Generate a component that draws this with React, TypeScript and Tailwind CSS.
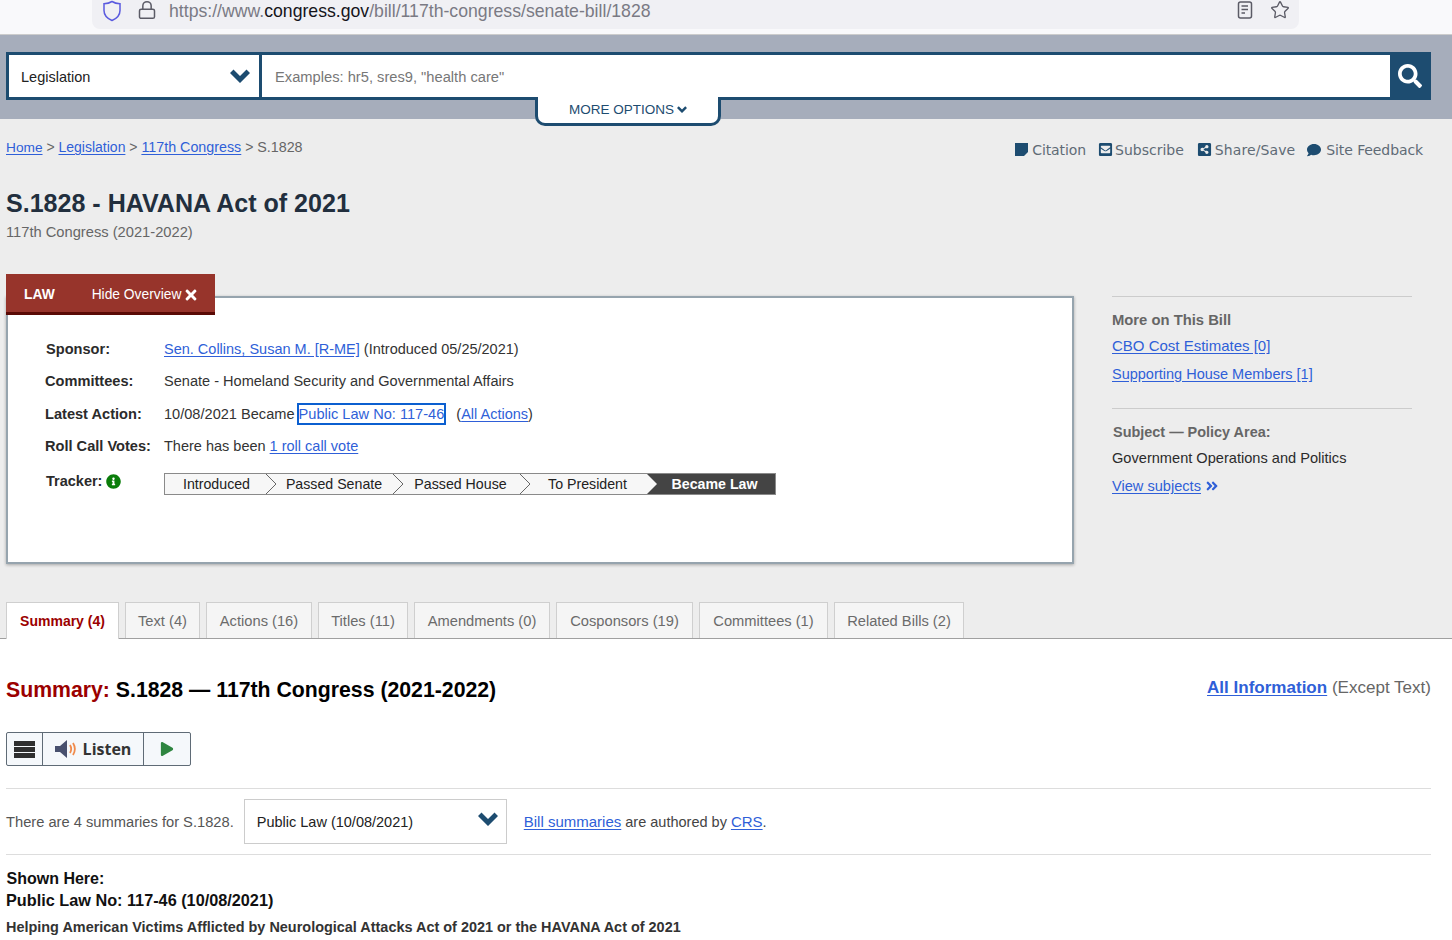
import React from "react";
import { FaSearch, FaTimes, FaInfoCircle, FaAngleDoubleRight, FaEnvelopeSquare, FaShareAltSquare, FaComment, FaPlay } from "react-icons/fa";
import { Lock, Star } from "lucide-react";

const A = ({ children, className = "" }: { children: React.ReactNode; className?: string }) => (
  <a href="#" className={`text-[#2f5fd8] underline underline-offset-2 ${className}`}>{children}</a>
);

const HeavyChevron = ({ w, h, className = "" }: { w: number; h: number; className?: string }) => (
  <svg width={w} height={h} viewBox="0 0 20 14" className={className} fill="#1d4c70">
    <path d="M0 4 L3.500 0.500 L10 7 L16.500 0.500 L20 4 L10 14 Z" />
  </svg>
);

function Row({ label, children, labelClass = "", className = "", valueClass = "" }: { label: React.ReactNode; children: React.ReactNode; labelClass?: string; className?: string; valueClass?: string }) {
  return (
    <div className={`flex h-[32px] items-center ${className}`}>
      <div className={`w-[119px] text-[14.6px] font-bold text-[#2b2b2b] ${labelClass}`}>{label}</div>
      <div className={`text-[#333] ${valueClass}`}>{children}</div>
    </div>
  );
}

const Chevron = () => (
  <svg width="11" height="20" viewBox="0 0 11 20" className="block" fill="none">
    <path d="M0 0 L10 10 L0 20" stroke="#666" strokeWidth="1" />
  </svg>
);

function Tracker() {
  const items: [string, number, string][] = [
    ["Introduced", 101, "pl-[2px]"],
    ["Passed Senate", 127, "pl-[9px]"],
    ["Passed House", 127, "pl-[8px]"],
    ["To President", 127, "pl-[8px]"],
  ];
  return (
    <div className="box-border flex h-[22px] w-[612px] border border-[#8a8a8a] bg-[#f7f7f7] text-[14.2px] text-[#222]">
      {items.map(([t, w, pad], i) => (
        <div key={t} className={`relative flex items-center justify-center ${pad}`} style={{ width: w }}>
          {t}
          {i < 3 && <div className="absolute left-full top-0 z-10"><Chevron /></div>}
        </div>
      ))}
      <div className="relative flex flex-1 items-center justify-center bg-[#444] pl-[7px] font-bold text-white">
        <svg width="10" height="20" viewBox="0 0 10 20" className="absolute left-0 top-0" fill="#f7f7f7"><path d="M0 0 L10 10 L0 20 Z" /></svg>
        Became Law
      </div>
    </div>
  );
}

function Tab({ children, w, active = false }: { children: React.ReactNode; w: number; active?: boolean }) {
  return (
    <div
      style={{ width: w }}
      className={`flex items-center justify-center border border-b-0 border-[#cfcfcf] ${active ? "h-[37px] border-[#bcbcbc] bg-white text-[14px] font-bold text-[#9b0000]" : "h-[36px] bg-[#f5f5f5] pt-[2px] text-[14.7px] text-[#6b6b6b]"}`}
    >
      {children}
    </div>
  );
}

export default function App() {
  return (
    <div className="h-[940px] w-[1452px] overflow-hidden bg-white text-[14.5px] leading-none text-[#333] [font-family:'Liberation_Sans',Arial,sans-serif]">
      {/* browser bar */}
      <div className="h-[35px] border-b border-[#cccccc] bg-[#f9f9fb] pl-[92px]">
        <div className="flex h-[29px] w-[1207px] items-center rounded-b-lg bg-[#f0f0f4] pb-[6px]">
          <svg width="20" height="22" viewBox="0 0 20 22" className="ml-[10px] -mt-[2px]" fill="none">
            <path d="M10 1.500 C7.500 3 5 3.600 2 3.800 V10.500 C2 15.500 5.500 18.600 10 20.500 C14.500 18.600 18 15.500 18 10.500 V3.800 C15 3.600 12.500 3 10 1.500Z" stroke="#5a5adf" strokeWidth="1.500" />
          </svg>
          <Lock size={20} strokeWidth={1.8} color="#5b5b66" className="ml-[15px] -mt-[4px]" />
          <div className="ml-[12px] text-[17.66px] text-[#7a7a84]">
            https://www.<span className="text-[#15141a]">congress.gov</span>/bill/117th-congress/senate-bill/1828
          </div>
          <div className="flex-1" />
          <svg width="16" height="18" viewBox="0 0 16 18" fill="none" stroke="#5b5b66" strokeWidth="1.5" className="-mt-[4px] -ml-[1px]">
            <rect x="1.500" y="1" width="13" height="16" rx="2" />
            <path d="M4.500 5 H11 M4.500 8.500 H11 M4.500 12 H8" />
          </svg>
          <Star size={20} strokeWidth={1.6} color="#5b5b66" className="ml-[17px] mr-[9px] -mt-[4px]" />
        </div>
      </div>

      {/* search band */}
      <div className="h-[84px] bg-[#a6adbb] px-[6px] pt-[17px]">
        <div className="relative flex h-[48px] w-[1425px] border-[3px] border-[#1d4c70] bg-white">
          <div className="flex w-[253px] items-center justify-between border-r-[3px] border-[#1d4c70] pl-[12px] pr-[9px] pt-[2px] text-[14.500px] text-[#222]">
            Legislation
            <HeavyChevron w={20} h={14} className="-mt-[3px]" />
          </div>
          <div className="flex flex-1 items-center pl-[13px] pt-[2px] text-[14.7px] text-[#777]">Examples: hr5, sres9, "health care"</div>
          <div className="flex w-[38px] items-center justify-center bg-[#1d4c70] pl-[2px]">
            <FaSearch size={24} color="#fff" />
          </div>
          <div className="absolute left-[526px] top-[42px] flex h-[29px] w-[186px] items-center justify-center gap-[3px] rounded-b-[10px] border-[3px] border-t-0 border-[#1d4c70] bg-white pb-[1px] text-[13.5px] text-[#1d4c70]">
            MORE OPTIONS <HeavyChevron w={10} h={7} />
          </div>
        </div>
      </div>

      {/* grey main */}
      <div className="h-[520px] border-b border-[#a0a0a0] bg-[#ededed]">
        <div className="flex justify-between pl-[6px] pr-[29px]">
          <div className="pt-[21px] text-[14px] text-[#666]">
            <A className="text-[13.7px]">Home</A> &gt; <A>Legislation</A> &gt; <A className="text-[14.3px]">117th Congress</A> &gt; <span className="text-[14.3px]">S.1828</span>
          </div>
          <div className="flex items-center pt-[23px] text-[14px] text-[#5f6b76] [font-family:'DejaVu_Sans',sans-serif]">
            <span className="flex items-center gap-[4px] tracking-[-0.1px]">
              <svg width="13" height="13" viewBox="0 0 13 13" fill="#1d4c70"><path d="M0 0 H13 V9 L9 13 H0Z" /></svg>Citation
            </span>
            <span className="ml-[12px] flex items-center gap-[2px]"><FaEnvelopeSquare size={15} color="#1d4c70" />Subscribe</span>
            <span className="ml-[13px] flex items-center gap-[3px] tracking-[0.1px]"><FaShareAltSquare size={15} color="#1d4c70" />Share/Save</span>
            <span className="ml-[12px] flex items-center gap-[5px] tracking-[-0.1px]"><FaComment size={14} color="#1d4c70" />Site Feedback</span>
          </div>
        </div>

        <h1 className="ml-[6px] mt-[34px] text-[25.05px] font-bold text-[#222f3e]">S.1828 - HAVANA Act of 2021</h1>
        <div className="ml-[6px] mt-[9px] text-[14.7px] text-[#666]">117th Congress (2021-2022)</div>

        <div className="mt-[56px] flex items-start">
          {/* overview panel */}
          <div className="relative ml-[6px] h-[268px] w-[1068px] border-2 border-[#96a4ae] bg-white pl-[37px] pt-[36px] shadow-[0_1px_3px_rgba(0,0,0,0.3)]">
            <div className="absolute left-[-2px] top-[-24px] flex h-[41px] w-[209px] items-center border-b-[3px] border-[#5a0a05] bg-[#97342b] pl-[18px] pt-[5px] text-[13.8px] text-white">
              <span className="font-bold">LAW</span>
              <span className="ml-[37px] flex items-center">Hide Overview<FaTimes size={16} className="ml-[2px]" /></span>
            </div>
            <Row label="Sponsor:" labelClass="pl-[1px]" valueClass="pb-[2px]">
              <A>Sen. Collins, Susan M. [R-ME]</A> (Introduced 05/25/2021)
            </Row>
            <Row label="Committees:"><span className="text-[14.56px]">Senate - Homeland Security and Governmental Affairs</span></Row>
            <Row label="Latest Action:" className="mt-[1px]">
              <span className="text-[14.58px]">10/08/2021 Became </span><span className="-ml-[2px] border-2 border-[#0b5fd0] py-[1px]"><a href="#" className="text-[14.6px] text-[#2f5fd8]">Public Law No: 117-46</a></span>
              <span className="ml-[10px]">(<A>All Actions</A>)</span>
            </Row>
            <Row label="Roll Call Votes:" valueClass="pb-[2px]">
              There has been <A>1 roll call vote</A>
            </Row>
            <div className="flex pt-[11px]">
              <div className="flex w-[119px] items-start gap-[4px] pl-[1px] font-bold text-[#2b2b2b]">
                Tracker: <FaInfoCircle size={15} color="#0a7d0a" />
              </div>
              <div className="-mt-[1px]"><Tracker /></div>
            </div>
          </div>

          {/* sidebar */}
          <div className="ml-[38px] w-[300px] text-[14.5px] text-[#2b2b2b]">
            <div className="border-t border-[#cccccc] pt-[16px]">
              <div className="text-[14.8px] font-bold text-[#666]">More on This Bill</div>
              <div className="mt-[10px] text-[15px]"><A>CBO Cost Estimates [0]</A></div>
              <div className="mt-[14px]"><A>Supporting House Members [1]</A></div>
            </div>
            <div className="mt-[27px] border-t border-[#cccccc] pt-[16px]">
              <div className="pl-[1px] text-[14.45px] font-bold text-[#666]">Subject — Policy Area:</div>
              <div className="mt-[11px] text-[14.6px]">Government Operations and Politics</div>
              <div className="mt-[14px] flex items-center gap-[4px]"><A className="text-[14.6px]">View subjects </A><FaAngleDoubleRight size={14} color="#2f5fd8" /></div>
            </div>
          </div>
        </div>

        {/* tabs */}
        <div className="ml-[6px] mt-[38px] flex items-start gap-[6px]">
          <Tab w={113} active>Summary (4)</Tab>
          <Tab w={75}>Text (4)</Tab>
          <Tab w={106}>Actions (16)</Tab>
          <Tab w={90}>Titles (11)</Tab>
          <Tab w={136}>Amendments (0)</Tab>
          <Tab w={137}>Cosponsors (19)</Tab>
          <Tab w={129}>Committees (1)</Tab>
          <Tab w={130}>Related Bills (2)</Tab>
        </div>
      </div>

      {/* summary */}
      <div className="px-[6px] pr-[21px]">
        <div className="flex items-center justify-between pt-[40px]">
          <h2 className="text-[21.25px] font-bold text-black"><span className="text-[#9b0000]">Summary:</span> S.1828 — 117th Congress (2021-2022)</h2>
          <div className="pb-[6px] text-[17.05px] text-[#666]"><A className="font-bold">All Information</A> (Except Text)</div>
        </div>

        <div className="mt-[30px] flex h-[34px] w-[185px] rounded-[2px] border border-[#5f6b76] bg-[#f5f8fb] text-[16px] font-bold text-[#333] [font-family:'Open_Sans',sans-serif]">
          <div className="flex w-[36px] items-center justify-center border-r border-[#5f6b76]">
            <svg width="21" height="17" viewBox="0 0 21 17" fill="#2f2f2f"><rect width="21" height="5" /><rect y="6" width="21" height="5" /><rect y="12" width="21" height="5" /></svg>
          </div>
          <div className="flex w-[101px] items-center justify-center gap-[5px] border-r border-[#5f6b76]">
            <svg width="23" height="18" viewBox="0 0 23 18" fill="none">
              <path d="M0 6 H5 L12 0 V18 L5 12 H0Z" fill="#48506e" />
              <path d="M15 5 C16.500 7.500 16.500 10.500 15 13 M18 3 C20.500 7 20.500 11 18 15" stroke="#f08a4b" strokeWidth="1.8" />
            </svg>
            Listen
          </div>
          <div className="flex flex-1 items-center justify-center"><FaPlay size={14} color="#2e8540" /></div>
        </div>

        <div className="mt-[22px] flex h-[67px] items-center border-y border-[#dddddd] text-[14.7px]">
          <span className="pt-[2px] text-[#555]">There are 4 summaries for S.1828.</span>
          <div className="ml-[10px] flex h-[45px] w-[263px] items-center justify-between border border-[#cccccc] pl-[12px] pr-[8px] pt-[1px] text-[14.5px] text-[#222]">
            Public Law (10/08/2021)
            <HeavyChevron w={20} h={14} className="-mt-[6px]" />
          </div>
          <span className="ml-[17px] text-[14.5px] text-[#444]"><A className="text-[15px]">Bill summaries</A> are authored by <A className="text-[15px]">CRS</A>.</span>
        </div>

        <div className="mt-[16px] pl-[0.5px] text-[16px] font-bold text-[#111]">Shown Here:</div>
        <div className="mt-[5px] text-[16.25px] font-bold text-[#111]">Public Law No: 117-46 (10/08/2021)</div>
        <div className="mt-[12px] text-[14.44px] font-bold text-[#333]">Helping American Victims Afflicted by Neurological Attacks Act of 2021 or the HAVANA Act of 2021</div>
      </div>
    </div>
  );
}
